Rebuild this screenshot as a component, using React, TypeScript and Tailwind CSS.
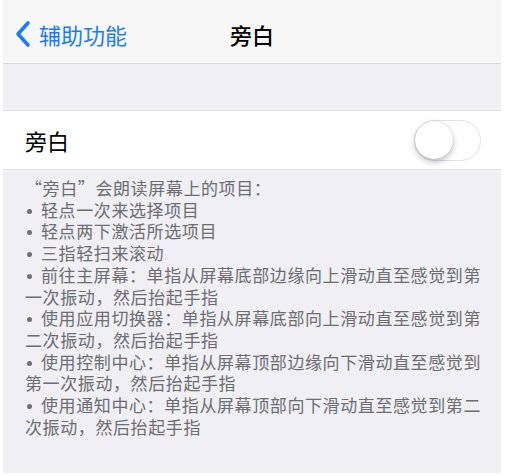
import React from "react";

function Bullet() {
  return <span className="inline-block w-[5px] h-[5px] rounded-full bg-[#707075] ml-[2px] mr-[9px] align-middle relative top-[-1px]" />;
}

export default function App() {
  const font = { fontFamily: '"Noto Sans CJK SC", "Noto Sans", sans-serif' };
  return (
    <div className="w-[509px] h-[476px] bg-white overflow-hidden" style={font}>
      <div className="ml-[3px] w-[498px] h-[473px] bg-[#efeff4] flex flex-col">
        {/* Nav bar */}
        <div className="relative h-[64px] bg-[#f7f7f8] border-b border-[#d8d8dc] flex items-center">
          <div className="flex items-center pl-[12px] pt-[4px]">
            <svg width="16" height="28" viewBox="0 0 16 28" className="mr-[8px]">
              <path d="M13 3 L3 14 L13 25" fill="none" stroke="#1a7cf5" strokeWidth="3.6" strokeLinecap="round" strokeLinejoin="round" />
            </svg>
            <span className="text-[22px] leading-none text-[#1a7cf5]">辅助功能</span>
          </div>
          <div className="absolute left-0 right-0 top-0 bottom-0 flex items-center justify-center pt-[4px] pointer-events-none">
            <span className="text-[22px] leading-none font-medium text-black">旁白</span>
          </div>
        </div>
        <div className="h-[46px]" />
        {/* Row */}
        <div className="h-[60px] bg-white border-y border-[#e3e3e7] flex items-center justify-between pl-[22px] pr-[20px]">
          <span className="text-[22px] leading-none text-black">旁白</span>
          <div className="w-[67px] h-[41px] rounded-full border-[1.5px] border-[#e2e2e6] bg-white relative">
            <div className="absolute left-[0px] top-[0px] w-[38px] h-[38px] rounded-full bg-white shadow-[0_3px_6px_rgba(0,0,0,0.25),0_0_1px_rgba(0,0,0,0.25)]" />
          </div>
        </div>
        {/* Footer */}
        <div className="pl-[22px] pt-[7px] text-[17px] leading-[21.7px] tracking-[0.6px] text-[#6d6d72] whitespace-nowrap">
          <div>“旁白”会朗读屏幕上的项目：</div>
          <div><Bullet />轻点一次来选择项目</div>
          <div><Bullet />轻点两下激活所选项目</div>
          <div><Bullet />三指轻扫来滚动</div>
          <div><Bullet />前往主屏幕：单指从屏幕底部边缘向上滑动直至感觉到第</div>
          <div>一次振动，然后抬起手指</div>
          <div><Bullet />使用应用切换器：单指从屏幕底部向上滑动直至感觉到第</div>
          <div>二次振动，然后抬起手指</div>
          <div><Bullet />使用控制中心：单指从屏幕顶部边缘向下滑动直至感觉到</div>
          <div>第一次振动，然后抬起手指</div>
          <div><Bullet />使用通知中心：单指从屏幕顶部向下滑动直至感觉到第二</div>
          <div>次振动，然后抬起手指</div>
        </div>
      </div>
    </div>
  );
}
